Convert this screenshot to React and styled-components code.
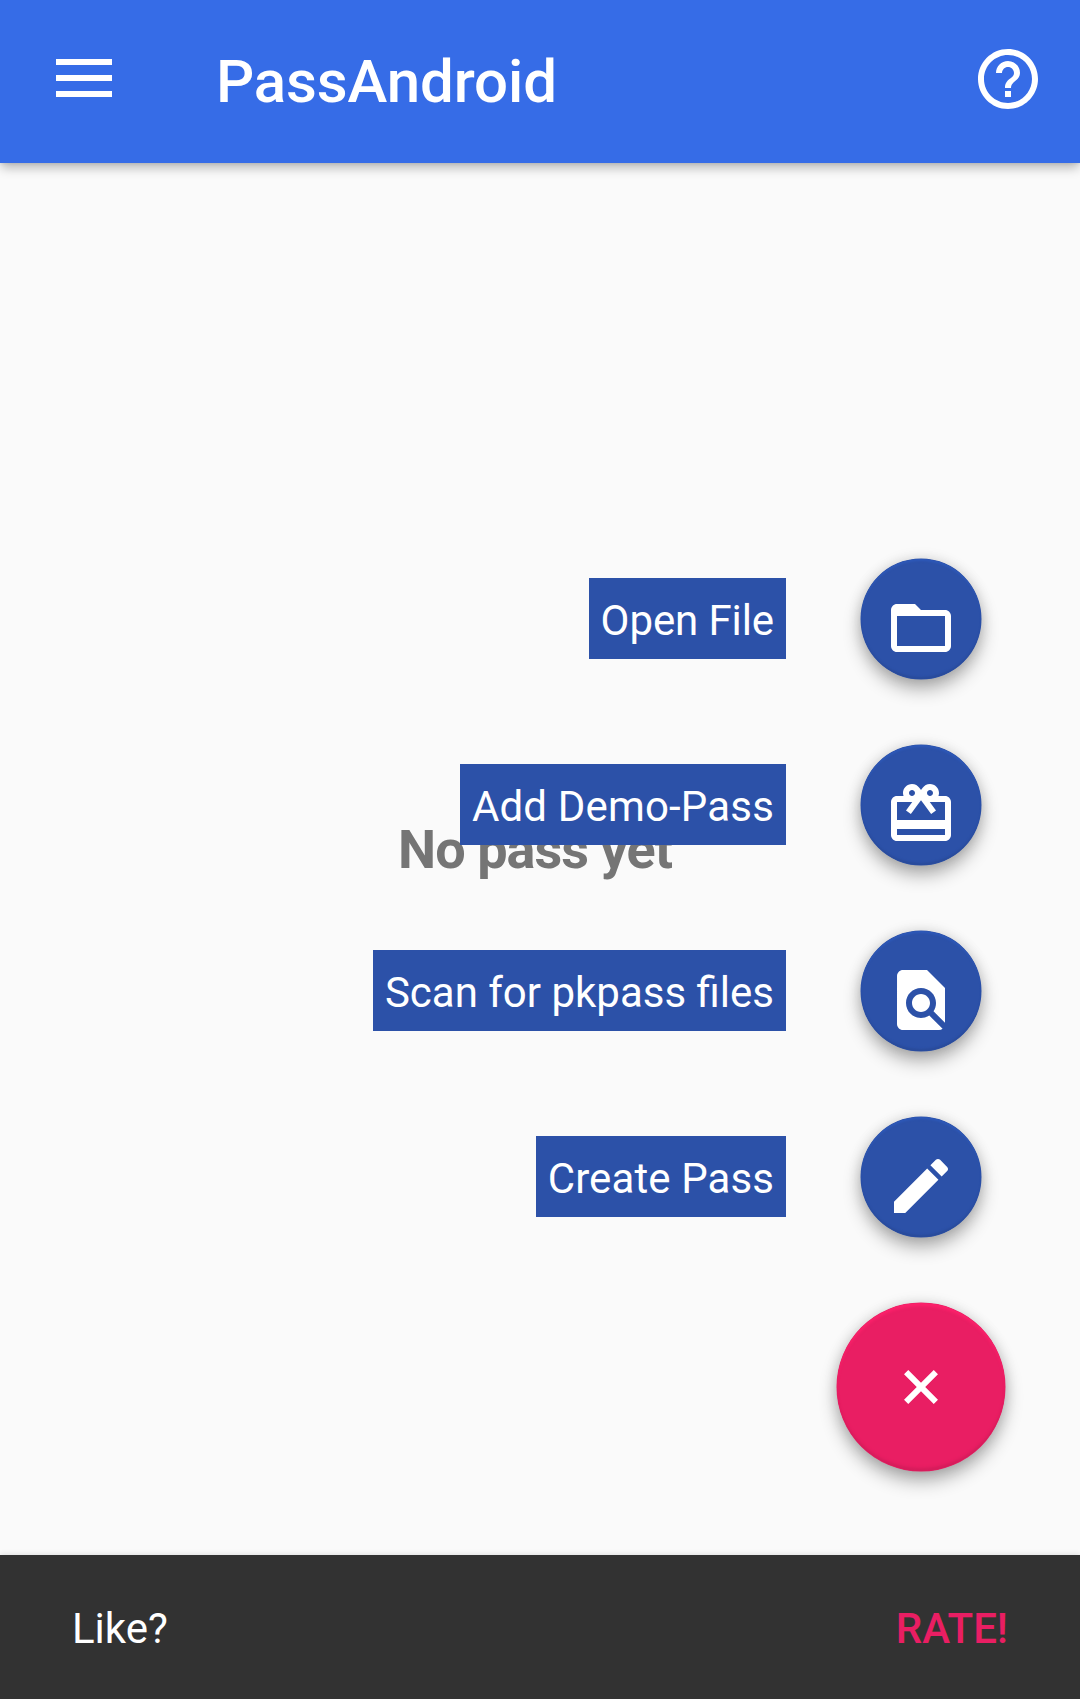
import React from "react";
import styled, { createGlobalStyle, css } from "styled-components";

const GlobalStyle = createGlobalStyle`
  * { box-sizing: border-box; }
  body {
    margin: 0;
    background: #fafafa;
    font-family: Roboto, sans-serif;
  }
  button {
    border: 0;
    padding: 0;
    background: none;
    font-family: inherit;
    color: inherit;
  }
`;

const Screen = styled.div`
  display: flex;
  flex-direction: column;
  width: 1080px;
  height: 1699px;
  overflow: hidden;
  background: #fafafa;
`;

const AppBar = styled.header`
  display: flex;
  align-items: center;
  flex: none;
  height: 163px;
  padding: 0 36px 5px 56px;
  background: #366ce7;
  color: #fff;
  z-index: 1;
  box-shadow: 0 6px 10px -1px rgba(0, 0, 0, 0.26), 0 0 4px rgba(0, 0, 0, 0.12);
`;

const MenuButton = styled.button`
  display: flex;
  flex-direction: column;
  gap: 10px;
  width: 56px;
  margin-top: -2px;
`;

const MenuLine = styled.span`
  height: 6px;
  background: #fff;
`;

const Title = styled.h1`
  flex: 1;
  margin: 6px 0 0 104px;
  font-size: 60px;
  font-weight: 500;
  line-height: 70px;
  letter-spacing: -0.12px;
`;

const Icon = styled.svg`
  display: block;
  width: 72px;
  height: 72px;
  fill: #fff;
`;

const Content = styled.main`
  position: relative;
  display: flex;
  flex: 1;
  align-items: center;
  justify-content: center;
`;

const EmptyMessage = styled.p`
  margin: 0 10px 18px 0;
  font-size: 54px;
  font-weight: 700;
  line-height: 64px;
  letter-spacing: -0.95px;
  color: #757575;
`;

const SpeedDial = styled.div`
  position: absolute;
  right: 75px;
  bottom: 84px;
  display: flex;
  flex-direction: column;
  align-items: flex-end;
  gap: 66px;
`;

const Action = styled.div`
  display: flex;
  align-items: center;
  gap: 75px;
  padding-right: 24px;
`;

const ActionLabel = styled.span`
  height: 81px;
  margin-bottom: 2px;
  padding: 18px 12px 0;
  background: #2c51a8;
  color: #fff;
  font-size: 42px;
  line-height: 49px;
  letter-spacing: ${({ $tracking }) => $tracking}px;
  white-space: nowrap;
`;

const roundButton = css`
  display: flex;
  align-items: center;
  justify-content: center;
  border-radius: 50%;
`;

const MiniFab = styled.button`
  ${roundButton}
  width: 120px;
  height: 120px;
  padding-top: 18px;
  background: #2c51a8;
  box-shadow: 0 0 0 0.5px #2c51a8, 0 10px 18px rgba(0, 0, 0, 0.31),
    0 0 14px rgba(0, 0, 0, 0.13), inset 0 3px 2px -1px #2d58b8,
    inset 0 -3px 2px -1px #294b9b;
`;

const MainFab = styled.button`
  ${roundButton}
  width: 168px;
  height: 168px;
  background: #e91e63;
  box-shadow: 0 0 0 0.5px #e91e63, 0 10px 18px rgba(0, 0, 0, 0.31),
    0 0 14px rgba(0, 0, 0, 0.13), inset 0 4px 3px -1px #fc216b,
    inset 0 -4px 3px -1px #d51c5b;
`;

const CloseIcon = styled(Icon)`
  transform: rotate(45deg);
`;

const Snackbar = styled.footer`
  display: flex;
  align-items: center;
  justify-content: space-between;
  flex: none;
  height: 144px;
  padding: 2px 72px 0;
  background: #323232;
  color: #fff;
  font-size: 42px;
  line-height: 49px;
  box-shadow: 0 0 6px rgba(0, 0, 0, 0.14);
`;

const RateButton = styled.button`
  color: #e91e63;
  font-size: 42px;
  font-weight: 500;
  line-height: 49px;
`;

const actions = [
  {
    label: "Open File",
    tracking: -0.1,
    path: "M20 6h-8l-2-2H4c-1.1 0-1.99.9-1.99 2L2 18c0 1.1.9 2 2 2h16c1.1 0 2-.9 2-2V8c0-1.1-.9-2-2-2zm0 12H4V8h16v10z",
  },
  {
    label: "Add Demo-Pass",
    tracking: 0.17,
    path: "M20 6h-2.18c.11-.31.18-.65.18-1 0-1.66-1.34-3-3-3-1.05 0-1.96.54-2.5 1.35l-.5.67-.5-.68C10.96 2.54 10.05 2 9 2 7.34 2 6 3.34 6 5c0 .35.07.69.18 1H4c-1.11 0-1.99.89-1.99 2L2 19c0 1.11.89 2 2 2h16c1.11 0 2-.89 2-2V8c0-1.11-.89-2-2-2zm-5-2c.55 0 1 .45 1 1s-.45 1-1 1-1-.45-1-1 .45-1 1-1zM9 4c.55 0 1 .45 1 1s-.45 1-1 1-1-.45-1-1 .45-1 1-1zm11 15H4v-2h16v2zm0-5H4V8h5.08L7 10.83 8.62 12 11 8.76l1-1.36 1 1.36L15.38 12 17 10.83 14.92 8H20v6z",
  },
  {
    label: "Scan for pkpass files",
    tracking: 0,
    path: "M20 19.59V8l-6-6H6c-1.1 0-1.99.9-1.99 2L4 20c0 1.1.89 2 1.99 2H18c.45 0 .85-.15 1.19-.4l-4.43-4.43c-.8.52-1.74.83-2.76.83-2.76 0-5-2.24-5-5s2.24-5 5-5 5 2.24 5 5c0 1.02-.31 1.96-.83 2.75L20 19.59zM9 13c0 1.66 1.34 3 3 3s3-1.34 3-3-1.34-3-3-3-3 1.34-3 3z",
  },
  {
    label: "Create Pass",
    tracking: 0.1,
    path: "M3 17.25V21h3.75L17.81 9.94l-3.75-3.75L3 17.25zM20.71 7.04c.39-.39.39-1.02 0-1.41l-2.34-2.34c-.39-.39-1.02-.39-1.41 0l-1.83 1.83 3.75 3.75 1.83-1.83z",
  },
];

const HELP_PATH =
  "M11 18h2v-2h-2v2zm1-16C6.48 2 2 6.48 2 12s4.48 10 10 10 10-4.48 10-10S17.52 2 12 2zm0 18c-4.41 0-8-3.59-8-8s3.59-8 8-8 8 3.59 8 8-3.59 8-8 8zm0-14c-2.21 0-4 1.79-4 4h2c0-1.1.9-2 2-2s2 .9 2 2c0 2-3 1.75-3 5h2c0-2.25 3-2.5 3-5 0-2.21-1.79-4-4-4z";

export default function App() {
  return (
    <>
      <GlobalStyle />
      <Screen>
        <AppBar>
          <MenuButton aria-label="Menu">
            <MenuLine />
            <MenuLine />
            <MenuLine />
          </MenuButton>
          <Title>PassAndroid</Title>
          <Icon viewBox="0 0 24 24">
            <path d={HELP_PATH} />
          </Icon>
        </AppBar>
        <Content>
          <EmptyMessage>No pass yet</EmptyMessage>
          <SpeedDial>
            {actions.map(({ label, tracking, path }) => (
              <Action key={label}>
                <ActionLabel $tracking={tracking}>{label}</ActionLabel>
                <MiniFab aria-label={label}>
                  <Icon viewBox="0 0 24 24">
                    <path d={path} />
                  </Icon>
                </MiniFab>
              </Action>
            ))}
            <MainFab aria-label="Close">
              <CloseIcon viewBox="0 0 24 24">
                <path d="M19 13h-6v6h-2v-6H5v-2h6V5h2v6h6v2z" />
              </CloseIcon>
            </MainFab>
          </SpeedDial>
        </Content>
        <Snackbar>
          <span>Like?</span>
          <RateButton>RATE!</RateButton>
        </Snackbar>
      </Screen>
    </>
  );
}
